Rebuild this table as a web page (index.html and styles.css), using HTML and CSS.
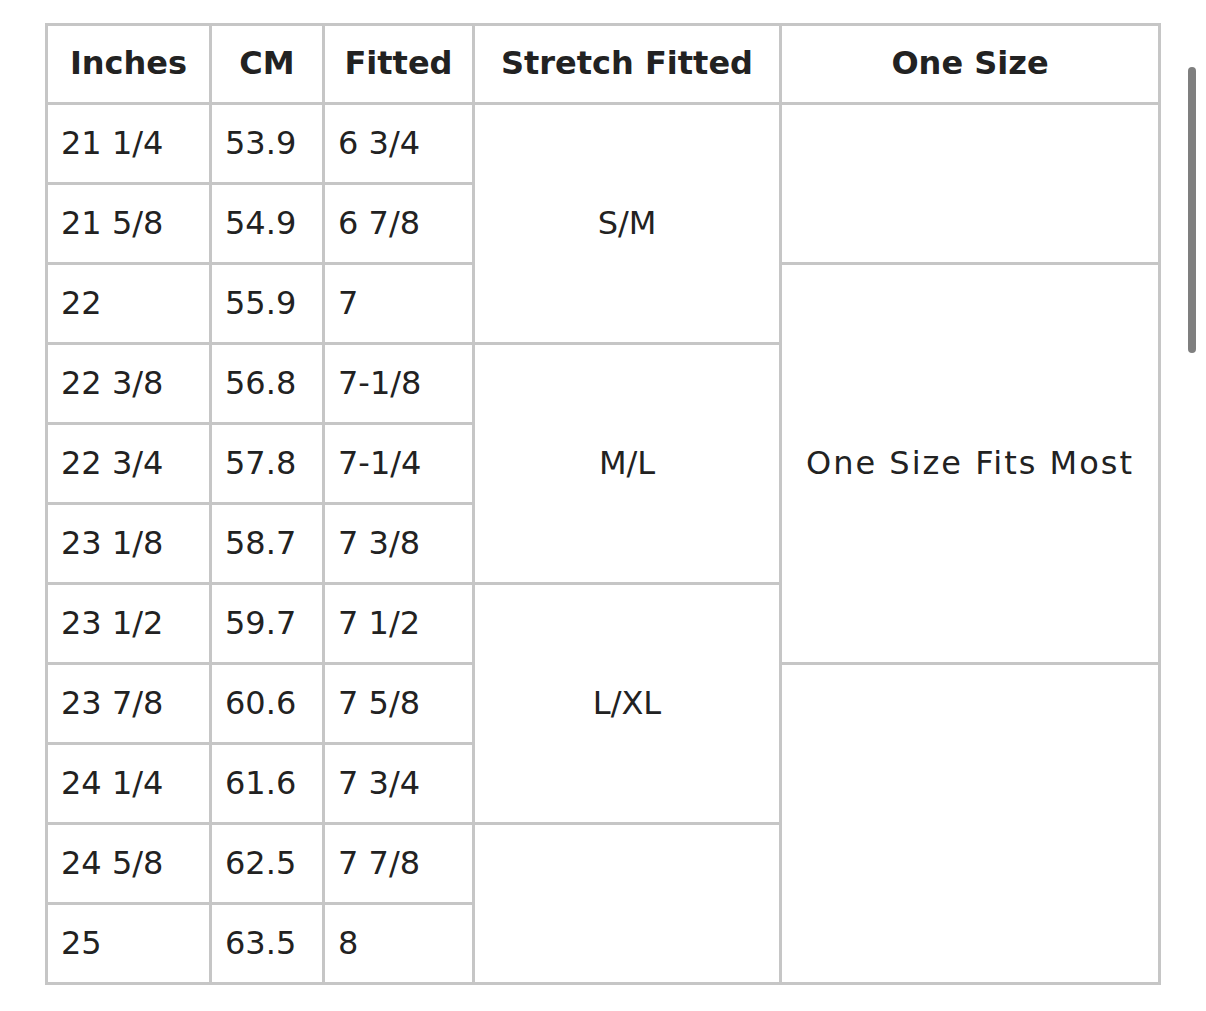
FILE: index.html
```html
<!DOCTYPE html>
<html>
<head>
<meta charset="utf-8">
<link rel="stylesheet" href="styles.css">
</head>
<body>
<div class="page">
  <div class="chart">
    <div class="cell head">Inches</div>
    <div class="cell head">CM</div>
    <div class="cell head">Fitted</div>
    <div class="cell head">Stretch Fitted</div>
    <div class="cell head">One Size</div>

    <div class="cell">21 1/4</div><div class="cell">53.9</div><div class="cell">6 3/4</div>
    <div class="cell span sf1">S/M</div>
    <div class="cell span os1"></div>

    <div class="cell">21 5/8</div><div class="cell">54.9</div><div class="cell">6 7/8</div>

    <div class="cell">22</div><div class="cell">55.9</div><div class="cell">7</div>
    <div class="cell span os2">One Size Fits Most</div>

    <div class="cell">22 3/8</div><div class="cell">56.8</div><div class="cell">7-1/8</div>
    <div class="cell span sf2">M/L</div>

    <div class="cell">22 3/4</div><div class="cell">57.8</div><div class="cell">7-1/4</div>

    <div class="cell">23 1/8</div><div class="cell">58.7</div><div class="cell">7 3/8</div>

    <div class="cell">23 1/2</div><div class="cell">59.7</div><div class="cell">7 1/2</div>
    <div class="cell span sf3">L/XL</div>

    <div class="cell">23 7/8</div><div class="cell">60.6</div><div class="cell">7 5/8</div>
    <div class="cell span os3"></div>

    <div class="cell">24 1/4</div><div class="cell">61.6</div><div class="cell">7 3/4</div>

    <div class="cell">24 5/8</div><div class="cell">62.5</div><div class="cell">7 7/8</div>
    <div class="cell span sf4"></div>

    <div class="cell">25</div><div class="cell">63.5</div><div class="cell">8</div>
  </div>
  <div class="scrollbar"></div>
</div>
</body>
</html>
```

FILE: styles.css
```css
html, body {
  margin: 0;
  padding: 0;
  background: #ffffff;
}

.page {
  position: relative;
  width: 1206px;
  height: 1011px;
  padding: 23px 0 0 45px;
  box-sizing: border-box;
  font-family: "DejaVu Sans", "Open Sans", sans-serif;
  color: #222222;
}

.chart {
  display: grid;
  grid-template-columns: 164px 113px 150px 307px 379px;
  grid-template-rows: 79px repeat(11, 80px);
  width: 1116px;
  border-left: 3px solid #c6c6c6;
  border-top: 3px solid #c6c6c6;
  box-sizing: border-box;
}

.cell {
  border-right: 3px solid #c6c6c6;
  border-bottom: 3px solid #c6c6c6;
  display: flex;
  align-items: center;
  padding-left: 13px;
  padding-bottom: 2px;
  font-size: 32px;
  font-weight: 400;
  white-space: nowrap;
}

.head {
  justify-content: center;
  padding-left: 0;
  padding-bottom: 2px;
  font-weight: 700;
  font-size: 32px;
}

.span {
  justify-content: center;
  padding-left: 0;
}

.os2 {
  letter-spacing: 2px;
}

.sf1 { grid-column: 4; grid-row: 2 / span 3; }
.sf2 { grid-column: 4; grid-row: 5 / span 3; }
.sf3 { grid-column: 4; grid-row: 8 / span 3; }
.sf4 { grid-column: 4; grid-row: 11 / span 2; }
.os1 { grid-column: 5; grid-row: 2 / span 2; }
.os2 { grid-column: 5; grid-row: 4 / span 5; }
.os3 { grid-column: 5; grid-row: 9 / span 4; }

.scrollbar {
  position: absolute;
  left: 1188px;
  top: 67px;
  width: 8px;
  height: 286px;
  border-radius: 4px;
  background: #7f7f7f;
}
```
